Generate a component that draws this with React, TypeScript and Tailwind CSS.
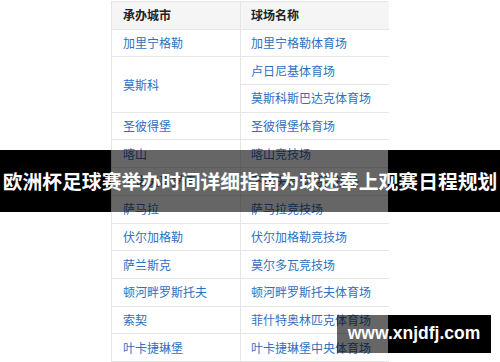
import React from "react";

const link = "text-[#2f6fbf]";
const cjk = { fontFamily: '"Noto Sans CJK SC", "Noto Sans", sans-serif' };

type Row = { city?: string; venue: string; span?: number; skip?: boolean };

const rows: Row[] = [
  { city: "加里宁格勒", venue: "加里宁格勒体育场" },
  { city: "莫斯科", venue: "卢日尼基体育场", span: 2 },
  { venue: "莫斯科斯巴达克体育场", skip: true },
  { city: "圣彼得堡", venue: "圣彼得堡体育场" },
  { city: "喀山", venue: "喀山竞技场" },
  { city: "下诺夫哥罗德", venue: "下诺夫哥罗德竞技场" },
  { city: "萨马拉", venue: "萨马拉竞技场" },
  { city: "伏尔加格勒", venue: "伏尔加格勒竞技场" },
  { city: "萨兰斯克", venue: "莫尔多瓦竞技场" },
  { city: "顿河畔罗斯托夫", venue: "顿河畔罗斯托夫体育场" },
  { city: "索契", venue: "菲什特奥林匹克体育场" },
  { city: "叶卡捷琳堡", venue: "叶卡捷琳堡中央体育场" },
];

export default function App() {
  const cells: React.ReactNode[] = [];
  rows.forEach((r, i) => {
    if (!r.skip) {
      cells.push(
        <div
          key={"c" + i}
          className={`flex items-center pl-[11px] border-b border-r border-[#e6e6e6] ${link} ${
            r.span === 2 ? "row-span-2" : ""
          }`}
        >
          {r.city}
        </div>
      );
    }
    cells.push(
      <div key={"v" + i} className={`flex items-center pl-[10px] border-b border-[#e6e6e6] ${link}`}>
        {r.venue}
      </div>
    );
  });

  return (
    <div className="relative w-[500px] h-[362px] bg-white overflow-hidden" style={cjk}>
      <div className="ml-[111px] mt-[1px] w-[277px] border-l border-t border-[#e6e6e6] text-[12px]">
        <div className="grid grid-cols-[129px_148px] auto-rows-[27.7px]">
          <div className="flex items-center pl-[11px] bg-[#f5f5f5] border-b border-r border-[#e6e6e6] font-bold text-[#222]">
            承办城市
          </div>
          <div className="flex items-center pl-[10px] bg-[#f5f5f5] border-b border-[#e6e6e6] font-bold text-[#222]">
            球场名称
          </div>
          {cells}
        </div>
      </div>

      <div className="absolute left-0 top-[150px] w-[500px] h-[62px]">
        <div className="flex h-full">
          <div className="w-[111px] bg-black" />
          <div className="w-[277px] bg-black/60" />
          <div className="flex-1 bg-black" />
        </div>
        <div className="absolute inset-0 flex items-center justify-center">
          <span className="whitespace-nowrap text-white font-bold text-[19.8px] leading-none">
            欧洲杯足球赛举办时间详细指南为球迷奉上观赛日程规划
          </span>
        </div>
      </div>

      <div className="absolute left-[337px] top-[315px] w-[154px] h-[38px]">
        <div className="flex h-full">
          <div className="w-[51px] bg-black/60" />
          <div className="flex-1 bg-black" />
        </div>
        <div
          className="absolute inset-0 flex items-center justify-center text-white font-bold text-[17.5px] leading-none"
          style={{ fontFamily: '"Liberation Sans", Arial, sans-serif' }}
        >
          www.xnjdfj.com
        </div>
      </div>
    </div>
  );
}
